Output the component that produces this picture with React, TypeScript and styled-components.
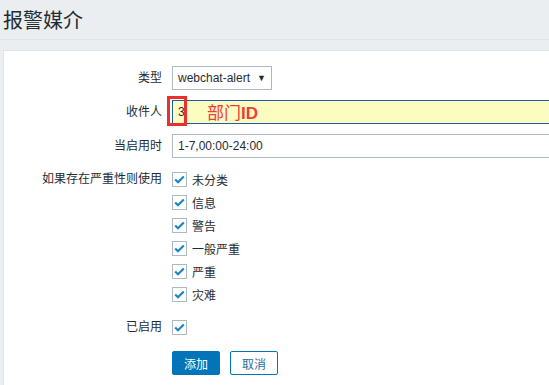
import React from "react";
import styled, { createGlobalStyle } from "styled-components";

const GlobalStyle = createGlobalStyle`
  html, body {
    margin: 0;
    padding: 0;
    background: #ebeef0;
    overflow: hidden;
  }
  body {
    font-family: Arial, "Liberation Sans", "Noto Sans CJK SC", sans-serif;
    font-size: 12px;
    color: #1f2c33;
  }
`;

const Page = styled.div`
  width: 549px;
  height: 385px;
  overflow: hidden;
`;

const Header = styled.div`
  height: 40px;
  box-sizing: border-box;
  padding: 9px 3px 0;
  border-bottom: 1px solid #dfe4e7;
`;

const Title = styled.h1`
  margin: 0;
  font-size: 20px;
  line-height: 24px;
  font-weight: normal;
  color: #1f2c33;
`;

const Panel = styled.div`
  margin: 10px 0 0 3px;
  width: 700px;
  background: #ffffff;
  border: 1px solid #dfe4e7;
  padding: 15px 0 40px;
`;

const Form = styled.div`
  display: grid;
  grid-template-columns: 158px 1fr;
  column-gap: 10px;
  row-gap: 10px;
`;

const Label = styled.div<{ $h: number }>`
  text-align: right;
  line-height: ${(p) => p.$h}px;
  white-space: nowrap;
`;

const Field = styled.div`
  position: relative;
  display: flex;
  align-items: flex-start;
`;

const Select = styled.div`
  box-sizing: border-box;
  width: 100px;
  height: 24px;
  border: 1px solid #acbbc2;
  background: #fff;
  display: flex;
  align-items: center;
  justify-content: space-between;
  padding: 0 5px 0 5px;
`;

const Arrow = styled.span`
  font-size: 9px;
  color: #1f2c33;
`;

const TextInput = styled.div<{ $focus?: boolean }>`
  box-sizing: border-box;
  width: 453px;
  height: 24px;
  line-height: 22px;
  padding: 0 5px;
  border: 1px solid ${(p) => (p.$focus ? "#1e5f97" : "#acbbc2")};
  background: ${(p) => (p.$focus ? "#fafcc0" : "#fff")};
`;

const Marker = styled.div`
  position: absolute;
  left: -5px;
  top: -4px;
  width: 20px;
  height: 30px;
  box-sizing: border-box;
  border: 3px solid #e8312f;
`;

const Note = styled.div`
  position: absolute;
  left: 35px;
  top: 0;
  line-height: 24px;
  font-size: 17px;
  color: #ee3b3b;
  font-family: "Noto Sans CJK SC", "Liberation Sans", sans-serif;

  b {
    font-family: Arial, "Liberation Sans", sans-serif;
    font-weight: bold;
  }
`;

const CheckList = styled.ul`
  list-style: none;
  margin: 0;
  padding: 0;
`;

const CheckItem = styled.li`
  height: 23px;
  display: flex;
  align-items: center;
  gap: 5px;
`;

const Box = styled.span`
  box-sizing: border-box;
  width: 15px;
  height: 15px;
  border: 1px solid #acbbc2;
  background: #fff;
  display: flex;
  align-items: center;
  justify-content: center;
`;

const Buttons = styled.div`
  display: flex;
  gap: 10px;
  margin-top: 2px;
`;

const Button = styled.button<{ $alt?: boolean }>`
  box-sizing: border-box;
  height: 24px;
  padding: 0 11px;
  font: inherit;
  border: 1px solid #0275b8;
  border-radius: 2px;
  background: ${(p) => (p.$alt ? "#fff" : "#0275b8")};
  color: ${(p) => (p.$alt ? "#1f6fa3" : "#fff")};
`;

const Check = () => (
  <Box>
    <svg width="11" height="9" viewBox="0 0 11 9">
      <polyline points="1.2,4.5 4,7.2 9.8,1.5" fill="none" stroke="#1b84c9" strokeWidth="2.2" />
    </svg>
  </Box>
);

const severities = ["未分类", "信息", "警告", "一般严重", "严重", "灾难"];

export default function App() {
  return (
    <Page>
      <GlobalStyle />
      <Header>
        <Title>报警媒介</Title>
      </Header>
      <Panel>
        <Form>
          <Label $h={24}>类型</Label>
          <Field>
            <Select>
              <span>webchat-alert</span>
              <Arrow>▼</Arrow>
            </Select>
          </Field>

          <Label $h={24}>收件人</Label>
          <Field>
            <TextInput $focus>3</TextInput>
            <Marker />
            <Note>
              部门<b>ID</b>
            </Note>
          </Field>

          <Label $h={24}>当启用时</Label>
          <Field>
            <TextInput>1-7,00:00-24:00</TextInput>
          </Field>

          <Label $h={23}>如果存在严重性则使用</Label>
          <CheckList>
            {severities.map((s) => (
              <CheckItem key={s}>
                <Check />
                <span>{s}</span>
              </CheckItem>
            ))}
          </CheckList>

          <Label $h={23}>已启用</Label>
          <CheckItem>
            <Check />
          </CheckItem>

          <div />
          <Buttons>
            <Button>添加</Button>
            <Button $alt>取消</Button>
          </Buttons>
        </Form>
      </Panel>
    </Page>
  );
}
